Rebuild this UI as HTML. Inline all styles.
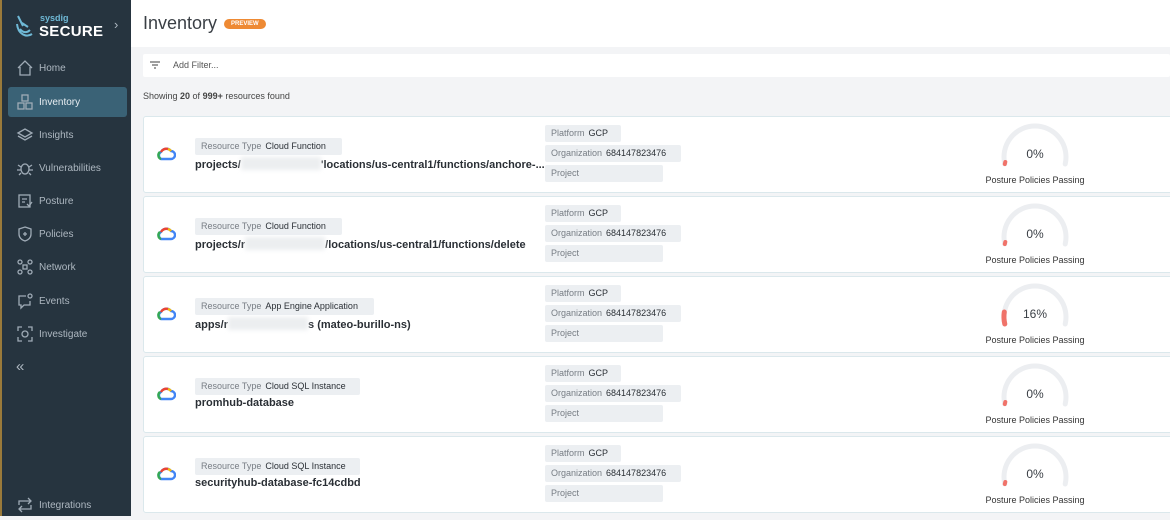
<!DOCTYPE html>
<html><head><meta charset="utf-8"><style>
*{margin:0;padding:0;box-sizing:border-box}
body{width:1170px;height:516px;overflow:hidden;background:#f3f4f6;font-family:"Liberation Sans",sans-serif;position:relative;color:#2a2f35}
.sb{position:absolute;left:0;top:0;width:131px;height:516px;background:#26343f;border-left:2px solid #9a7a3a}
.ni{position:absolute;left:14px;height:30px;display:flex;align-items:center;color:#aeb8c1;font-size:10px}
.ni svg{width:18px;height:18px;margin-right:5px;stroke:#9fabb6;fill:none;stroke-width:1.3}
.act{left:6px;width:119px;background:#3a6276;border-radius:3px;padding-left:8px;color:#e8eef2}
.hdr{position:absolute;left:131px;top:0;width:1039px;height:47px;background:#fff}
.card{position:absolute;left:143px;width:1030px;height:77px;background:#fff;border:1px solid #dbe8ec;border-radius:3px}
.tag{position:absolute;background:#eceff2;height:17px;font-size:9px;line-height:17px;padding-left:6px;color:#777d84;border-radius:2px}
.tag b{font-weight:normal;color:#2b3036;margin-left:4px}
.nm{position:absolute;left:51px;top:40px;font-size:11px;font-weight:bold;color:#2a2f35;white-space:nowrap}
.blur{display:inline-block;background:#eceef0;width:80px;height:13px;vertical-align:-2px;filter:blur(2px)}
.pct{position:absolute;left:871px;width:40px;top:30px;text-align:center;font-size:12px;color:#3a3f45}
.lbl{position:absolute;left:831px;width:120px;top:58px;text-align:center;font-size:9px;color:#333}
.g{position:absolute;left:856px;top:4px}
.logo{position:absolute;left:12px;top:29px}
</style></head><body>
<div class="sb">
 <svg style="position:absolute;left:12px;top:14px" width="22" height="26" viewBox="0 0 22 26"><path d="M4 2 L9 12 M3 10 C4 20 12 24 18 20 M6 15 C9 19 13 19 16 16 M8 9 L14 13" stroke="#6fb9d6" stroke-width="2" fill="none"/></svg>
 <div style="position:absolute;left:38px;top:13px;color:#6fb9d6;font-size:9px;font-weight:bold">sysdig</div>
 <div style="position:absolute;left:37px;top:23px;color:#fff;font-size:15px;font-weight:bold;letter-spacing:.3px">SECURE</div>
 <div style="position:absolute;left:112px;top:17px;color:#aeb8c1;font-size:13px">›</div>
 <div class="ni" style="top:53px"><svg viewBox="0 0 18 18"><path d="M2 9 L9 2 L16 9 M4 8 V16 H14 V8"/></svg>Home</div>
 <div class="ni act" style="top:87px"><svg viewBox="0 0 18 18"><rect x="6" y="2" width="6" height="6"/><rect x="2" y="10" width="6" height="6"/><rect x="10" y="10" width="6" height="6"/></svg>Inventory</div>
 <div class="ni" style="top:120px"><svg viewBox="0 0 18 18"><path d="M2 7 L9 3 L16 7 L9 11Z M2 10 L9 14 L16 10"/></svg>Insights</div>
 <div class="ni" style="top:153px"><svg viewBox="0 0 18 18"><ellipse cx="9" cy="10" rx="4" ry="5"/><path d="M2 6 L5 8 M16 6 L13 8 M1 11 H5 M13 11 H17 M3 16 L5 14 M15 16 L13 14"/></svg>Vulnerabilities</div>
 <div class="ni" style="top:186px"><svg viewBox="0 0 18 18"><rect x="3" y="3" width="11" height="12"/><path d="M6 7 H11 M6 10 H9 M11 12 L13 14 L16 10"/></svg>Posture</div>
 <div class="ni" style="top:219px"><svg viewBox="0 0 18 18"><path d="M9 2 L15 4 V9 C15 13 12 15 9 16 C6 15 3 13 3 9 V4Z M9 7 V11 M7 9 H11"/></svg>Policies</div>
 <div class="ni" style="top:252px"><svg viewBox="0 0 18 18"><circle cx="4" cy="4" r="2"/><circle cx="14" cy="4" r="2"/><circle cx="4" cy="14" r="2"/><circle cx="14" cy="14" r="2"/><rect x="7" y="7" width="4" height="4"/></svg>Network</div>
 <div class="ni" style="top:286px"><svg viewBox="0 0 18 18"><path d="M10 4 H3 V13 H5 V16 L8 13 H14 V9"/><circle cx="14" cy="4" r="2"/></svg>Events</div>
 <div class="ni" style="top:319px"><svg viewBox="0 0 18 18"><path d="M2 6 V2 H6 M12 2 H16 V6 M16 12 V16 H12 M6 16 H2 V12"/><circle cx="9" cy="9" r="3"/></svg>Investigate</div>
 <div style="position:absolute;left:14px;top:358px;color:#aeb8c1;font-size:15px">«</div>
 <div class="ni" style="top:490px"><svg viewBox="0 0 18 18"><path d="M3 9 V5 H15 M12 2 L15 5 L12 8 M15 9 V13 H3 M6 10 L3 13 L6 16"/></svg>Integrations</div>
</div>
<div class="hdr">
 <div style="position:absolute;left:12px;top:13px;font-size:18px;color:#3a3f45">Inventory</div>
 <div style="position:absolute;left:93px;top:19px;background:#ee8a34;color:#fff;font-size:6px;font-weight:bold;border-radius:6px;padding:2px 7px">PREVIEW</div>
</div>
<div style="position:absolute;left:143px;top:54px;width:1027px;height:23px;background:#fff;border-radius:2px">
 <svg style="position:absolute;left:7px;top:7px" width="10" height="8"><path d="M0 1H10M2 4H8M4 7H6" stroke="#666" stroke-width="1.2"/></svg>
 <div style="position:absolute;left:30px;top:6px;font-size:9px;color:#555">Add Filter...</div>
</div>
<div style="position:absolute;left:143px;top:91px;font-size:9px;color:#444">Showing <b>20</b> of <b>999+</b> resources found</div>

<div class="card" style="top:116px">
 <svg class="logo" width="20" height="16" viewBox="0 0 20 16"><path d="M5 13 A4 4 0 0 1 5 6 A6 6 0 0 1 15 5 A4 4 0 0 1 15 13 Z" fill="none" stroke="#4285f4" stroke-width="2.4"/><path d="M5 13 A4 4 0 0 1 4 6" stroke="#34a853" stroke-width="2.4" fill="none"/><path d="M5 6 A6 6 0 0 1 12 3" stroke="#ea4335" stroke-width="2.4" fill="none"/><path d="M12 3 A6 6 0 0 1 15 5" stroke="#fbbc05" stroke-width="2.4" fill="none"/></svg>
 <div class="tag" style="left:51px;top:21px;width:147px">Resource Type<b>Cloud Function</b></div>
 <div class="nm">projects/<span class="blur"></span>'locations/us-central1/functions/anchore-...</div>
 <div class="tag" style="left:401px;top:8px;width:76px">Platform<b>GCP</b></div>
 <div class="tag" style="left:401px;top:28px;width:136px">Organization<b>684147823476</b></div>
 <div class="tag" style="left:401px;top:48px;width:118px">Project</div>
 <svg class="g" width="72" height="50"><path d="M4.8 43 A31 31 0 1 1 65.2 43" fill="none" stroke="#eceef1" stroke-width="5" stroke-linecap="round"/><path d="M4.8 43 L5.3 41" stroke="#f0736a" stroke-width="4" stroke-linecap="round"/></svg>
 <div class="pct">0%</div><div class="lbl">Posture Policies Passing</div>
</div>
<div class="card" style="top:196px">
 <svg class="logo" width="20" height="16" viewBox="0 0 20 16"><path d="M5 13 A4 4 0 0 1 5 6 A6 6 0 0 1 15 5 A4 4 0 0 1 15 13 Z" fill="none" stroke="#4285f4" stroke-width="2.4"/><path d="M5 13 A4 4 0 0 1 4 6" stroke="#34a853" stroke-width="2.4" fill="none"/><path d="M5 6 A6 6 0 0 1 12 3" stroke="#ea4335" stroke-width="2.4" fill="none"/><path d="M12 3 A6 6 0 0 1 15 5" stroke="#fbbc05" stroke-width="2.4" fill="none"/></svg>
 <div class="tag" style="left:51px;top:21px;width:147px">Resource Type<b>Cloud Function</b></div>
 <div class="nm">projects/r<span class="blur"></span>/locations/us-central1/functions/delete</div>
 <div class="tag" style="left:401px;top:8px;width:76px">Platform<b>GCP</b></div>
 <div class="tag" style="left:401px;top:28px;width:136px">Organization<b>684147823476</b></div>
 <div class="tag" style="left:401px;top:48px;width:118px">Project</div>
 <svg class="g" width="72" height="50"><path d="M4.8 43 A31 31 0 1 1 65.2 43" fill="none" stroke="#eceef1" stroke-width="5" stroke-linecap="round"/><path d="M4.8 43 L5.3 41" stroke="#f0736a" stroke-width="4" stroke-linecap="round"/></svg>
 <div class="pct">0%</div><div class="lbl">Posture Policies Passing</div>
</div>
<div class="card" style="top:276px">
 <svg class="logo" width="20" height="16" viewBox="0 0 20 16"><path d="M5 13 A4 4 0 0 1 5 6 A6 6 0 0 1 15 5 A4 4 0 0 1 15 13 Z" fill="none" stroke="#4285f4" stroke-width="2.4"/><path d="M5 13 A4 4 0 0 1 4 6" stroke="#34a853" stroke-width="2.4" fill="none"/><path d="M5 6 A6 6 0 0 1 12 3" stroke="#ea4335" stroke-width="2.4" fill="none"/><path d="M12 3 A6 6 0 0 1 15 5" stroke="#fbbc05" stroke-width="2.4" fill="none"/></svg>
 <div class="tag" style="left:51px;top:21px;width:179px">Resource Type<b>App Engine Application</b></div>
 <div class="nm">apps/r<span class="blur"></span>s (mateo-burillo-ns)</div>
 <div class="tag" style="left:401px;top:8px;width:76px">Platform<b>GCP</b></div>
 <div class="tag" style="left:401px;top:28px;width:136px">Organization<b>684147823476</b></div>
 <div class="tag" style="left:401px;top:48px;width:118px">Project</div>
 <svg class="g" width="72" height="50"><path d="M4.8 43 A31 31 0 1 1 65.2 43" fill="none" stroke="#eceef1" stroke-width="5" stroke-linecap="round"/><path d="M4.8 43 A31 31 0 0 1 4.3 31" stroke="#f0736a" stroke-width="5" stroke-linecap="round" fill="none"/></svg>
 <div class="pct">16%</div><div class="lbl">Posture Policies Passing</div>
</div>
<div class="card" style="top:356px">
 <svg class="logo" width="20" height="16" viewBox="0 0 20 16"><path d="M5 13 A4 4 0 0 1 5 6 A6 6 0 0 1 15 5 A4 4 0 0 1 15 13 Z" fill="none" stroke="#4285f4" stroke-width="2.4"/><path d="M5 13 A4 4 0 0 1 4 6" stroke="#34a853" stroke-width="2.4" fill="none"/><path d="M5 6 A6 6 0 0 1 12 3" stroke="#ea4335" stroke-width="2.4" fill="none"/><path d="M12 3 A6 6 0 0 1 15 5" stroke="#fbbc05" stroke-width="2.4" fill="none"/></svg>
 <div class="tag" style="left:51px;top:21px;width:165px">Resource Type<b>Cloud SQL Instance</b></div>
 <div class="nm">promhub-database</div>
 <div class="tag" style="left:401px;top:8px;width:76px">Platform<b>GCP</b></div>
 <div class="tag" style="left:401px;top:28px;width:136px">Organization<b>684147823476</b></div>
 <div class="tag" style="left:401px;top:48px;width:118px">Project</div>
 <svg class="g" width="72" height="50"><path d="M4.8 43 A31 31 0 1 1 65.2 43" fill="none" stroke="#eceef1" stroke-width="5" stroke-linecap="round"/><path d="M4.8 43 L5.3 41" stroke="#f0736a" stroke-width="4" stroke-linecap="round"/></svg>
 <div class="pct">0%</div><div class="lbl">Posture Policies Passing</div>
</div>
<div class="card" style="top:436px">
 <svg class="logo" width="20" height="16" viewBox="0 0 20 16"><path d="M5 13 A4 4 0 0 1 5 6 A6 6 0 0 1 15 5 A4 4 0 0 1 15 13 Z" fill="none" stroke="#4285f4" stroke-width="2.4"/><path d="M5 13 A4 4 0 0 1 4 6" stroke="#34a853" stroke-width="2.4" fill="none"/><path d="M5 6 A6 6 0 0 1 12 3" stroke="#ea4335" stroke-width="2.4" fill="none"/><path d="M12 3 A6 6 0 0 1 15 5" stroke="#fbbc05" stroke-width="2.4" fill="none"/></svg>
 <div class="tag" style="left:51px;top:21px;width:165px">Resource Type<b>Cloud SQL Instance</b></div>
 <div class="nm">securityhub-database-fc14cdbd</div>
 <div class="tag" style="left:401px;top:8px;width:76px">Platform<b>GCP</b></div>
 <div class="tag" style="left:401px;top:28px;width:136px">Organization<b>684147823476</b></div>
 <div class="tag" style="left:401px;top:48px;width:118px">Project</div>
 <svg class="g" width="72" height="50"><path d="M4.8 43 A31 31 0 1 1 65.2 43" fill="none" stroke="#eceef1" stroke-width="5" stroke-linecap="round"/><path d="M4.8 43 L5.3 41" stroke="#f0736a" stroke-width="4" stroke-linecap="round"/></svg>
 <div class="pct">0%</div><div class="lbl">Posture Policies Passing</div>
</div>
</body></html>
